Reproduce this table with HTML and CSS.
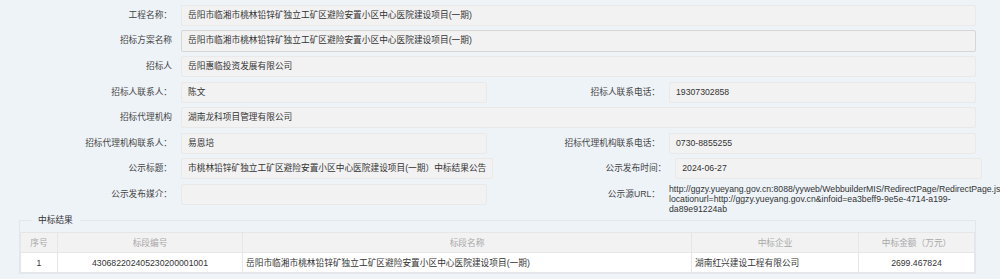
FILE: index.html
```html
<!DOCTYPE html>
<html lang="zh-CN">
<head>
<meta charset="utf-8">
<title>中标结果公告</title>
<link rel="stylesheet" href="styles.css">
</head>
<body>
<div class="page">
  <div class="form">
    <div class="row">
      <div class="field"><div class="label">工程名称：</div><div class="box">岳阳市临湘市桃林铅锌矿独立工矿区避险安置小区中心医院建设项目(一期)</div></div>
    </div>
    <div class="row">
      <div class="field"><div class="label">招标方案名称</div><div class="box box-input">岳阳市临湘市桃林铅锌矿独立工矿区避险安置小区中心医院建设项目(一期)</div></div>
    </div>
    <div class="row">
      <div class="field"><div class="label">招标人</div><div class="box">岳阳惠临投资发展有限公司</div></div>
    </div>
    <div class="row">
      <div class="field half"><div class="label">招标人联系人：</div><div class="box">陈文</div></div>
      <div class="field half"><div class="label">招标人联系电话：</div><div class="box">19307302858</div></div>
    </div>
    <div class="row">
      <div class="field"><div class="label">招标代理机构</div><div class="box">湖南龙科项目管理有限公司</div></div>
    </div>
    <div class="row">
      <div class="field half"><div class="label">招标代理机构联系人：</div><div class="box">易恩培</div></div>
      <div class="field half"><div class="label">招标代理机构联系电话：</div><div class="box">0730-8855255</div></div>
    </div>
    <div class="row">
      <div class="field half"><div class="label">公示标题：</div><div class="box">市桃林铅锌矿独立工矿区避险安置小区中心医院建设项目(一期）中标结果公告</div></div>
      <div class="field half"><div class="label">公示发布时间：</div><div class="box">2024-06-27</div></div>
    </div>
    <div class="row">
      <div class="field half"><div class="label">公示发布媒介：</div><div class="box"></div></div>
      <div class="field half"><div class="label">公示源URL：</div><div class="url"><span>http://ggzy.yueyang.gov.cn:8088/yyweb/WebbuilderMIS/RedirectPage/RedirectPage.jsp?</span><span>locationurl=http://ggzy.yueyang.gov.cn&amp;infoid=ea3beff9-9e5e-4714-a199-</span><span>da89e91224ab</span></div></div>
    </div>
  </div>
  <fieldset class="result">
    <legend>中标结果</legend>
    <table class="grid">
      <colgroup>
        <col class="c1"><col class="c2"><col class="c3"><col class="c4"><col class="c5">
      </colgroup>
      <thead>
        <tr><th>序号</th><th>标段编号</th><th>标段名称</th><th>中标企业</th><th>中标金额（万元）</th></tr>
      </thead>
      <tbody>
        <tr><td class="center">1</td><td class="center">430682202405230200001001</td><td>岳阳市临湘市桃林铅锌矿独立工矿区避险安置小区中心医院建设项目(一期)</td><td>湖南红兴建设工程有限公司</td><td class="center">2699.467824</td></tr>
      </tbody>
    </table>
  </fieldset>
</div>
</body>
</html>
```
FILE: styles.css
```css
html, body {
  margin: 0;
  padding: 0;
  overflow: hidden;
  background: #eef3f8;
}
body {
  font-family: "Liberation Sans", "Noto Sans CJK SC", sans-serif;
  font-size: 8.7px;
  color: #333;
}
.page {
  width: 976px;
  padding-top: 5px;
}
.form {
  display: flex;
  flex-direction: column;
  gap: 4.45px;
}
.row {
  display: flex;
}
.field {
  display: flex;
  flex: 1;
  align-items: flex-start;
}
.field.half {
  flex: 0 0 488px;
}
.field.half:first-child .box {
  margin-right: 1px;
}
.label {
  width: 172px;
  flex: 0 0 172px;
  margin-right: 9px;
  text-align: right;
  height: 21px;
  line-height: 21px;
  color: #444;
  white-space: nowrap;
}
.box {
  flex: 1;
  height: 21px;
  line-height: 19px;
  box-sizing: border-box;
  padding: 0 6px;
  background: #f2f2f2;
  border: 1px solid #e9e9e9;
  border-radius: 2px;
  white-space: nowrap;
  overflow: hidden;
  color: #333;
}
.box-input {
  height: 21.5px;
  border-color: #d6d6d6;
}
.url {
  flex: 1;
  display: flex;
  flex-direction: column;
  padding-top: 0.5px;
  line-height: 10px;
  color: #333;
  white-space: nowrap;
}
.result {
  margin: 0 0 0 19px;
  padding: 0;
  border: 1px solid #e1e7ee;
  border-right-width: 1px;
  width: 955px;
  min-width: 0;
  margin-top: 0;
}
.result legend {
  margin-left: 12px;
  padding: 0 7px 0 6px;
  line-height: 12px;
  color: #333;
}
.grid {
  margin-top: 5.5px;
  width: 100%;
  border-collapse: collapse;
  table-layout: fixed;
}
.c1 { width: 37px; }
.c2 { width: 185px; }
.c3 { width: 449px; }
.c4 { width: 167px; }
.c5 { width: auto; }
.grid th, .grid td {
  border: 1px solid #e6e6e6;
  padding: 0 3px;
  white-space: nowrap;
  overflow: hidden;
}
.grid th {
  height: 19.5px;
  background: #f2f2f2;
  color: #a8a8a8;
  font-weight: normal;
  text-align: center;
}
.grid td {
  height: 19px;
  background: #fff;
  color: #333;
  text-align: left;
}
.grid td.center {
  text-align: center;
}
```
